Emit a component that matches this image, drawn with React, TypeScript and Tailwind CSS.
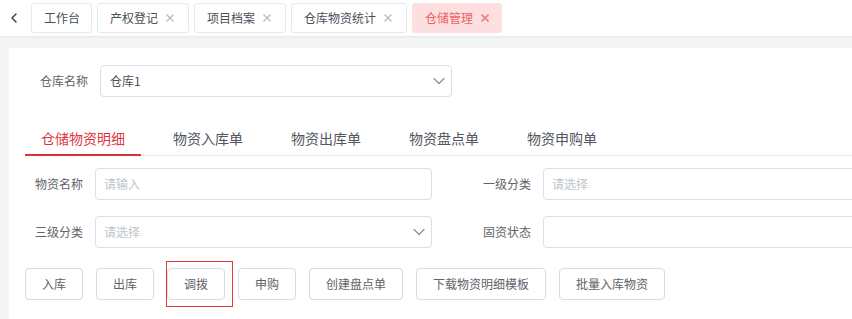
import React from "react";
import { ChevronLeft, ChevronDown } from "lucide-react";

function CloseX({ active }: { active?: boolean }) {
  return (
    <svg width="8" height="8" viewBox="0 0 8 8" className="ml-[8px] shrink-0">
      <path
        d="M0.5 0.5 L7.5 7.5 M7.5 0.5 L0.5 7.5"
        stroke={active ? "#f07d80" : "#b4b7bd"}
        strokeWidth={active ? 1.6 : 1.1}
        fill="none"
      />
    </svg>
  );
}

function TopTab({ label, closable, active }: { label: string; closable?: boolean; active?: boolean }) {
  return (
    <div
      className={
        "h-[30px] flex items-center rounded-[3px] border text-[12px] " +
        (active
          ? "bg-[#fddfe0] border-[#fddfe0] text-[#ee5f64] pl-3 pr-[12px]"
          : "bg-white border-[#e6e8ec] text-[#4a4f58] " + (closable ? "pl-3 pr-[14px]" : "pl-3 pr-[11px]"))
      }
    >
      <span className="leading-none">{label}</span>
      {closable && <CloseX active={active} />}
    </div>
  );
}

function Field({ label, placeholder, select }: { label: string; placeholder?: string; select?: boolean }) {
  return (
    <div className="flex items-center shrink-0 w-[448px]">
      <div className="w-[70px] pr-3 text-right text-[12px] text-[#5f6368] shrink-0">{label}</div>
      <div className="h-[32px] w-[337px] border border-[#dcdfe6] rounded-[4px] bg-white flex items-center pl-2 shrink-0">
        <span className="flex-1 text-[12px] text-[#c0c4cc]">{placeholder}</span>
        {select && <ChevronDown size={20} strokeWidth={1.5} className="text-[#8e929b] mr-[2px]" />}
      </div>
    </div>
  );
}

function Btn({ label }: { label: string }) {
  return (
    <div className="h-[32px] px-4 border border-[#d9dae3] rounded-[4px] bg-white flex items-center text-[12px] text-[#5f6368] whitespace-nowrap">
      {label}
    </div>
  );
}

export default function App() {
  const tabs = ["仓储物资明细", "物资入库单", "物资出库单", "物资盘点单", "物资申购单"];
  return (
    <div className="w-[852px] h-[319px] overflow-hidden bg-[#f4f5f7] font-['Noto_Sans_CJK_SC','Noto_Sans',sans-serif]">
      {/* top tag bar */}
      <div className="h-[36px] bg-white flex items-center shadow-[0_1px_3px_rgba(0,0,0,0.07)] relative z-10">
        <div className="w-[27px] h-full flex items-center justify-center shrink-0">
          <ChevronLeft size={16} strokeWidth={2.2} className="text-[#3d4450] ml-[1px]" />
        </div>
        <div className="flex items-center gap-[5px] pl-[4px] h-full">
          <TopTab label="工作台" />
          <TopTab label="产权登记" closable />
          <TopTab label="项目档案" closable />
          <TopTab label="仓库物资统计" closable />
          <TopTab label="仓储管理" closable active />
        </div>
      </div>

      {/* card */}
      <div className="ml-[9px] mt-[12px] bg-white h-[300px] w-[900px]">
        <div className="pt-[17px] flex items-center pl-[31px]">
          <span className="text-[12px] text-[#5f6368]">仓库名称</span>
          <div className="ml-3 w-[352px] h-[32px] border border-[#dcdfe6] rounded-[4px] flex items-center pl-[9px]">
            <span className="flex-1 text-[12px] text-[#4a4f58]">仓库1</span>
            <ChevronDown size={20} strokeWidth={1.5} className="text-[#8e929b] mr-[2px]" />
          </div>
        </div>

        {/* tabs */}
        <div className="mt-[21px] ml-4 flex gap-4 border-b border-[#e4e7ed]">
          {tabs.map((t, i) => (
            <div
              key={t}
              className={
                "relative px-4 pt-[10px] pb-[7px] leading-[20px] text-[14px] " +
                (i === 0 ? "text-[#e0353f]" : "text-[#50555e]")
              }
            >
              {t}
              {i === 0 && <div className="absolute left-0 right-0 bottom-[-1px] h-[2px] bg-[#dc3338]" />}
            </div>
          ))}
        </div>

        {/* form */}
        <div className="ml-4 mt-[12px] flex">
          <Field label="物资名称" placeholder="请输入" />
          <Field label="一级分类" placeholder="请选择" />
        </div>
        <div className="ml-4 mt-[16px] flex">
          <Field label="三级分类" placeholder="请选择" select />
          <Field label="固资状态" />
        </div>

        {/* buttons */}
        <div className="ml-4 mt-[20px] flex items-center gap-[13px]">
          <Btn label="入库" />
          <Btn label="出库" />
          <div className="relative">
            <Btn label="调拨" />
            <div className="absolute left-[-1px] top-[-7px] w-[67px] h-[46px] border border-[#e8393a] pointer-events-none" />
          </div>
          <Btn label="申购" />
          <Btn label="创建盘点单" />
          <Btn label="下载物资明细模板" />
          <Btn label="批量入库物资" />
        </div>
      </div>
    </div>
  );
}
